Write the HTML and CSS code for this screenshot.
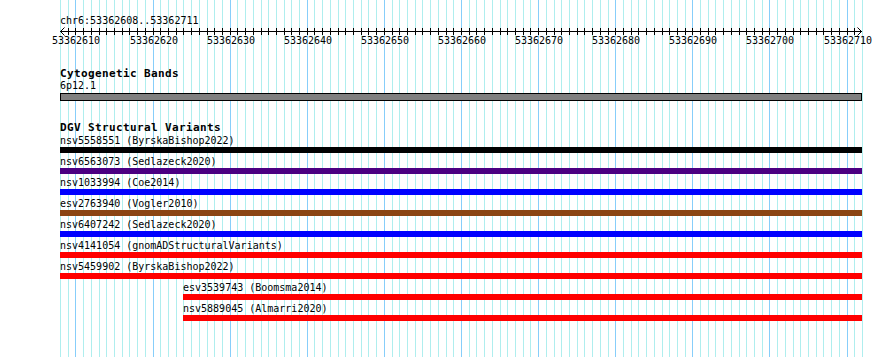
FILE: index.html
```html
<!DOCTYPE html>
<html lang="en">
<head>
    <meta charset="UTF-8">
    <title>chr6:53362608..53362711</title>
    <link rel="stylesheet" href="styles.css">
</head>
<body>
<div class="browser">
    <svg class="canvas" id="canvas" width="890" height="357"></svg>
    <div class="content">
        <div class="ruler">
            <div class="locus">chr6:53362608..53362711</div>
        </div>
        <div class="tracks">
            <section class="track cyto">
                <h3 class="track-title">Cytogenetic Bands</h3>
                <div class="feature-label">6p12.1</div>
                <div class="band"></div>
            </section>
            <section class="track dgv">
                <h3 class="track-title">DGV Structural Variants</h3>
                <div class="feature">
                    <div class="feature-label">nsv5558551 (ByrskaBishop2022)</div>
                    <div class="bar black"></div>
                </div>
                <div class="feature">
                    <div class="feature-label">nsv6563073 (Sedlazeck2020)</div>
                    <div class="bar purple"></div>
                </div>
                <div class="feature">
                    <div class="feature-label">nsv1033994 (Coe2014)</div>
                    <div class="bar blue"></div>
                </div>
                <div class="feature">
                    <div class="feature-label">esv2763940 (Vogler2010)</div>
                    <div class="bar brown"></div>
                </div>
                <div class="feature">
                    <div class="feature-label">nsv6407242 (Sedlazeck2020)</div>
                    <div class="bar blue"></div>
                </div>
                <div class="feature">
                    <div class="feature-label">nsv4141054 (gnomADStructuralVariants)</div>
                    <div class="bar red"></div>
                </div>
                <div class="feature">
                    <div class="feature-label">nsv5459902 (ByrskaBishop2022)</div>
                    <div class="bar red"></div>
                </div>
                <div class="feature shifted">
                    <div class="feature-label">esv3539743 (Boomsma2014)</div>
                    <div class="bar red"></div>
                </div>
                <div class="feature shifted">
                    <div class="feature-label">nsv5889045 (Almarri2020)</div>
                    <div class="bar red"></div>
                </div>
            </section>
        </div>
    </div>
</div>
<script>
    const svg = document.getElementById("canvas");
    const NS = "http://www.w3.org/2000/svg";
    const start = 53362608;
    const end = 53362711;
    const left = 60;
    const width = 802;
    const bpCount = end - start + 1;

    function xAt(k) {
        return Math.round(left + k * width / bpCount);
    }
    function add(tag, attrs, text) {
        const el = document.createElementNS(NS, tag);
        for (const a in attrs) el.setAttribute(a, attrs[a]);
        if (text) el.textContent = text;
        svg.appendChild(el);
        return el;
    }

    // grid: one line per base, every 10th darker
    for (let k = 0; k <= bpCount; k++) {
        const x = xAt(k) + 0.5;
        const major = (start + k) % 10 === 0;
        add("line", { x1: x, x2: x, y1: 0, y2: 357, class: major ? "grid-major" : "grid-minor" });
    }

    // ruler
    const rightEnd = left + width;
    add("line", { x1: left, x2: rightEnd, y1: 31.5, y2: 31.5, class: "axis" });
    add("polyline", { points: `${left + 4.5},27.5 ${left + 0.5},31.5 ${left + 4.5},35.5`, class: "axis" });
    add("polyline", { points: `${rightEnd - 4.5},27.5 ${rightEnd - 0.5},31.5 ${rightEnd - 4.5},35.5`, class: "axis" });
    for (let k = 1; k < bpCount; k++) {
        const x = xAt(k) + 0.5;
        add("line", { x1: x, x2: x, y1: 28, y2: 35, class: "axis" });
        if ((start + k) % 10 === 0) {
            add("text", { x: xAt(k) + 1, y: 44, class: "tick-label" }, String(start + k));
        }
    }
</script>
</body>
</html>
```

FILE: styles.css
```css
* { box-sizing: border-box; }
body {
    margin: 0;
    background: #fff;
    color: #000;
    font-family: "DejaVu Sans Mono", "Liberation Mono", monospace;
}
.browser {
    position: relative;
    width: 890px;
    height: 357px;
    overflow: hidden;
}
.canvas {
    position: absolute;
    top: 0;
    left: 0;
}
.grid-minor {
    stroke: #afeeee;
    stroke-width: 1;
}
.grid-major {
    stroke: #87cefa;
    stroke-width: 1;
}
.axis {
    stroke: #000;
    stroke-width: 1;
    fill: none;
}
.tick-label {
    font-family: "DejaVu Sans Mono", monospace;
    font-size: 10px;
    text-anchor: middle;
    fill: #000;
}
.content {
    position: relative;
}
.ruler {
    height: 68px;
    padding: 14px 0 0 60px;
}
.locus,
.feature-label {
    font-size: 10px;
    line-height: 12px;
    white-space: nowrap;
}
.locus {
    line-height: 13px;
}
.tracks {
    padding-left: 60px;
    width: 862px;
}
.track-title {
    margin: 0;
    font-size: 11px;
    font-weight: bold;
    line-height: 12px;
    letter-spacing: 0.38px;
}
.cyto .band {
    margin-top: 1px;
    height: 8px;
    background: #808080;
    border: 1px solid #000;
}
.dgv {
    margin-top: 20px;
}
.dgv .track-title {
    line-height: 14px;
}
.feature {
    margin-bottom: 3px;
}
.feature.shifted {
    margin-left: 123px;
}
.bar {
    height: 6px;
}
.bar.black { background: #000; }
.bar.purple { background: #4b0082; }
.bar.blue { background: #0000ff; }
.bar.brown { background: #8b4513; }
.bar.red { background: #ff0000; }
```
